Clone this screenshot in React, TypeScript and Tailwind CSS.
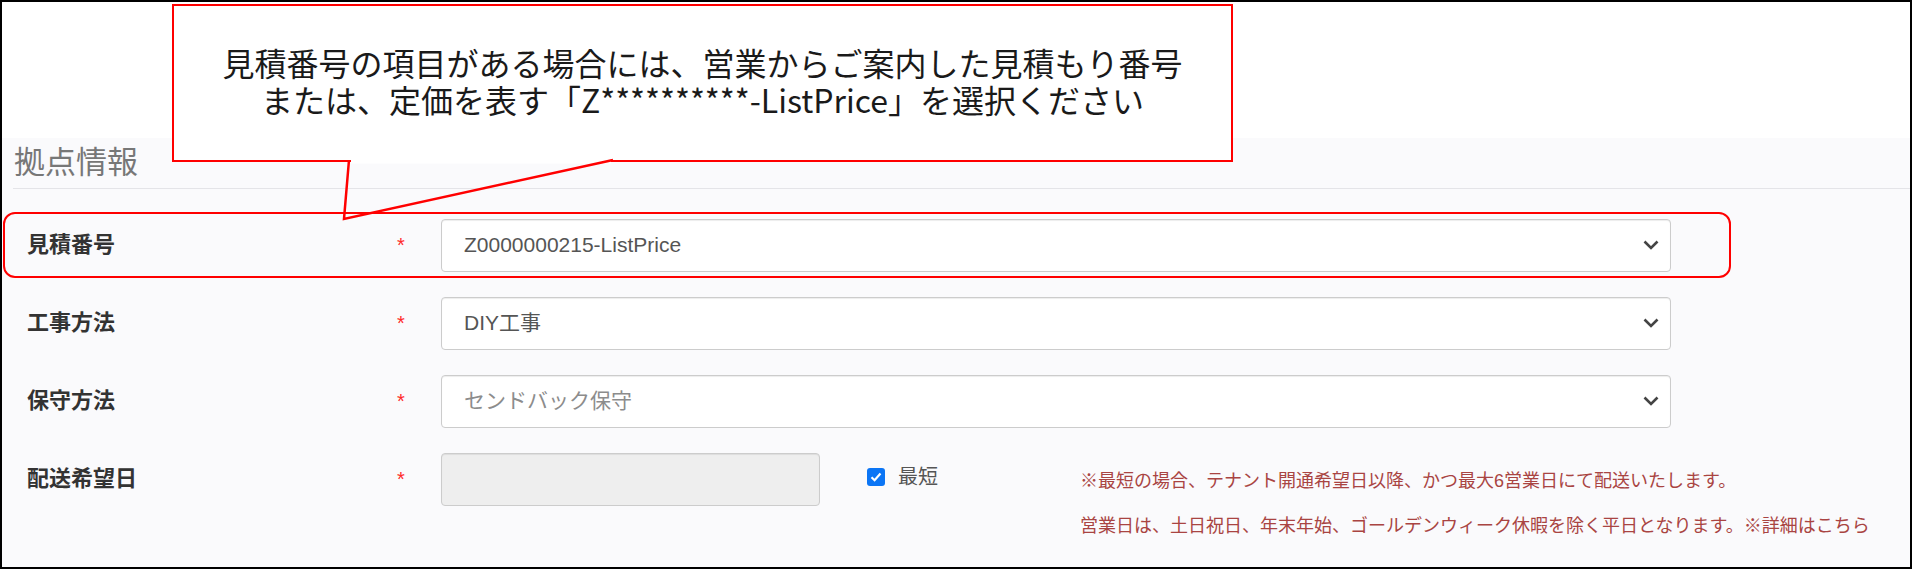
import React from "react";

function Chevron() {
  return (
    <svg width="16" height="10" viewBox="0 0 16 10" fill="none" className="shrink-0" aria-hidden="true">
      <path d="M1.5 1.5 8 8l6.5-6.5" stroke="#444444" strokeWidth="2.6" />
    </svg>
  );
}

function SelectBox({ value, muted }: { value: string; muted?: boolean }) {
  return (
    <div className="flex h-[53px] w-[1230px] shrink-0 items-center justify-between rounded-[4px] border border-[#cccccc] bg-white pl-[22px] pr-[11px] shadow-[inset_0_1px_1px_rgba(0,0,0,0.075)]">
      <span className={muted ? "text-[21px] text-[#8c8c8c]" : "text-[21px] text-[#555555]"}>{value}</span>
      <Chevron />
    </div>
  );
}

function FieldRow({
  label,
  highlight,
  children,
}: {
  label: string;
  highlight?: boolean;
  children: React.ReactNode;
}) {
  return (
    <div
      className={
        highlight
          ? "ml-[1px] flex h-[66px] w-[1728px] items-center rounded-[12px] border-2 border-[#ff0000] pl-[22px]"
          : "ml-[1px] flex h-[66px] w-[1728px] items-center rounded-[12px] border-2 border-transparent pl-[22px]"
      }
    >
      <div className="w-[370px] shrink-0 text-[22px] leading-[30px] font-bold text-[#333333]">{label}</div>
      <div className="w-[44px] shrink-0 text-[20px] leading-[20px] text-[#ff2a2a]">*</div>
      {children}
    </div>
  );
}

export default function App() {
  return (
    <div className="relative flex h-[569px] w-[1912px] flex-col overflow-hidden border-2 border-black bg-white font-['Liberation_Sans','Noto_Sans_CJK_JP',sans-serif]">
      {/* white strip above the panel */}
      <div className="h-[136px] shrink-0" />

      {/* 拠点情報 panel */}
      <div className="flex-1 bg-[#fafafc] pt-[5px]">
        <div className="ml-[11px] border-b border-[#e4e4e8] pb-[5px]">
          <h2 className="pl-[1px] text-[31px] leading-[40px] font-normal text-[#777777]">拠点情報</h2>
        </div>

        <div className="mt-[23px] flex flex-col gap-[12px]">
          <FieldRow label="見積番号" highlight>
            <SelectBox value="Z0000000215-ListPrice" />
          </FieldRow>
          <FieldRow label="工事方法">
            <SelectBox value="DIY工事" />
          </FieldRow>
          <FieldRow label="保守方法">
            <SelectBox value="センドバック保守" muted />
          </FieldRow>
          <FieldRow label="配送希望日">
            <div className="h-[53px] w-[379px] shrink-0 rounded-[4px] border border-[#cccccc] bg-[#eeeeee] shadow-[inset_0_1px_1px_rgba(0,0,0,0.075)]" />
            <div className="mb-[4px] ml-[47px] flex shrink-0 items-center">
              <span className="flex h-[18px] w-[18px] items-center justify-center rounded-[3px] bg-[#0b75f5]">
                <svg width="12" height="10" viewBox="0 0 12 10" fill="none" aria-hidden="true">
                  <path d="M1.5 5.2 4.6 8.2 10.5 1.6" stroke="#ffffff" strokeWidth="2.2" />
                </svg>
              </span>
              <span className="ml-[13px] whitespace-nowrap text-[20px] leading-[26px] text-[#555555]">最短</span>
            </div>
            <div className="ml-[142px] shrink-0 self-start whitespace-nowrap pt-[20px] text-[18px] leading-[26px] text-[#a94442]">
              <p>※最短の場合、テナント開通希望日以降、かつ最大6営業日にて配送いたします。</p>
              <p className="mt-[19px]">営業日は、土日祝日、年末年始、ゴールデンウィーク休暇を除く平日となります。※詳細はこちら</p>
            </div>
          </FieldRow>
        </div>
      </div>

      {/* callout annotation */}
      <div className="absolute left-[170px] top-[2px] h-[158px] w-[1061px] border-2 border-[#ff0000] bg-white pt-[38px] text-center font-['Noto_Sans_CJK_JP',sans-serif] text-[32px] leading-[37px] text-[#1a1a1a]">
        <p>
          見積番号の項目がある場合には、営業からご案内した見積もり番号
          <br />
          または、定価を表す「Z**********-ListPrice」を選択ください
        </p>
      </div>
      <svg
        className="pointer-events-none absolute left-[-2px] top-[-2px]"
        width="1912"
        height="569"
        viewBox="0 0 1912 569"
        fill="none"
        aria-hidden="true"
      >
        <rect x="351" y="158.5" width="260" height="5" fill="#ffffff" />
        <polyline points="349,160 344,219 613,160" stroke="#ff0000" strokeWidth="2.5" />
      </svg>
    </div>
  );
}
